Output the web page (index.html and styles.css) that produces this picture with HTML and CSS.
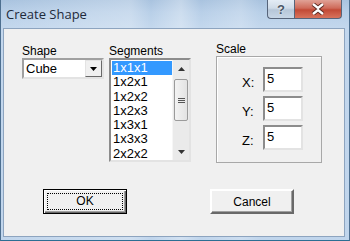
FILE: index.html
```html
<!DOCTYPE html>
<html lang="en">
<head>
  <meta charset="UTF-8" />
  <title>Create Shape</title>
  <link rel="stylesheet" href="styles.css">
</head>
<body>

  <div class="window">
    <div class="titlebar">
      <span class="title">Create Shape</span>
      <div class="caption-btns">
        <div class="cap-btn help">?</div>
        <div class="cap-btn close">
          <svg width="18" height="12" viewBox="0 0 18 12">
            <path d="M4 1 L9 5 L14 1 M4 11 L9 7 L14 11" fill="none" stroke="#5a2a22" stroke-width="4.2"/>
            <path d="M4 1 L9 5 L14 1 M4 11 L9 7 L14 11" fill="none" stroke="#fff" stroke-width="2.4"/>
          </svg>
        </div>
      </div>
    </div>

    <div class="client">
      <div class="columns">
        <div class="col col-shape">
          <div class="label">Shape</div>
          <div class="combo">
            <span class="combo-text">Cube</span>
            <div class="combo-btn">
              <svg width="7" height="4" viewBox="0 0 7 4"><path d="M0 0 H7 L3.5 4 Z" fill="#000"/></svg>
            </div>
          </div>
        </div>

        <div class="col col-seg">
          <div class="label">Segments</div>
          <div class="listbox">
            <ul class="items">
              <li class="selected">1x1x1</li>
              <li>1x2x1</li>
              <li>1x2x2</li>
              <li>1x2x3</li>
              <li>1x3x1</li>
              <li>1x3x3</li>
              <li>2x2x2</li>
            </ul>
            <div class="scrollbar">
              <div class="arrow">
                <svg width="7" height="4" viewBox="0 0 7 4"><path d="M0 4 H7 L3.5 0 Z" fill="#333"/></svg>
              </div>
              <div class="track">
                <div class="thumb">
                  <span class="grip"></span>
                  <span class="grip"></span>
                  <span class="grip"></span>
                </div>
              </div>
              <div class="arrow">
                <svg width="7" height="4" viewBox="0 0 7 4"><path d="M0 0 H7 L3.5 4 Z" fill="#333"/></svg>
              </div>
            </div>
          </div>
        </div>

        <div class="col col-scale">
          <div class="label">Scale</div>
          <div class="groupbox">
            <div class="field"><span class="field-label">X:</span><div class="edit">5</div></div>
            <div class="field"><span class="field-label">Y:</span><div class="edit">5</div></div>
            <div class="field"><span class="field-label">Z:</span><div class="edit">5</div></div>
          </div>
        </div>
      </div>

      <div class="buttons">
        <button class="btn default"><span class="focus">OK</span></button>
        <button class="btn">Cancel</button>
      </div>
    </div>
  </div>

</body>
</html>
```

FILE: styles.css
```css
* {
  margin: 0;
  padding: 0;
  box-sizing: border-box;
}

body {
  width: 350px;
  height: 241px;
  overflow: hidden;
  font-family: 'Liberation Sans', Arial, sans-serif;
  font-size: 12px;
  color: #000;
}

.window {
  width: 350px;
  height: 241px;
  display: flex;
  flex-direction: column;
  border-left: 1px solid #4d6f90;
  border-right: 1px solid #4d6f90;
  border-bottom: 1px solid #2c6e93;
  background:
    linear-gradient(90deg, rgba(255,255,255,0) 0, rgba(255,255,255,0.25) 130px, rgba(255,255,255,0) 150px,
      rgba(255,255,255,0.3) 180px, rgba(255,255,255,0) 200px, rgba(255,255,255,0.2) 240px, rgba(255,255,255,0) 260px),
    linear-gradient(180deg, #a9c3df 0, #b8cfe8 12px, #c3d7ed 28px, #c0d5ec 100%);
}

.titlebar {
  height: 28px;
  display: flex;
  justify-content: space-between;
  align-items: flex-start;
  padding-left: 5px;
}

.title {
  font-family: 'Open Sans', 'Liberation Sans', sans-serif;
  font-size: 13px;
  line-height: 15px;
  margin-top: 7px;
  color: #1e2a3a;
}

.caption-btns {
  display: flex;
  margin-right: 7px;
}

.cap-btn {
  height: 19px;
  border: 1px solid #56647a;
  border-top: none;
  display: flex;
  align-items: center;
  justify-content: center;
}

.help {
  width: 27px;
  border-radius: 0 0 0 4px;
  border-right: none;
  background: linear-gradient(180deg, #e4ecf5 0, #cfdbe8 45%, #b6c6d8 55%, #c7d6e6 100%);
  color: #4a5766;
  font-weight: bold;
  font-size: 13px;
  text-shadow: 0 0 2px #fff;
}

.close {
  width: 48px;
  border-radius: 0 0 4px 0;
  background: linear-gradient(180deg, #e0a296 0, #cf6b5a 45%, #c24a36 55%, #d8735c 100%);
}

.client {
  flex: 1;
  margin: 0 4px 3px 2px;
  background: #f0f0f0;
  border: 1px solid #8da4bf;
  padding: 15px 0 0 18px;
}

.columns {
  display: flex;
  align-items: flex-start;
}

.label {
  height: 14px;
  line-height: 14px;
}

.col-shape {
  width: 82px;
  margin-right: 5px;
}

.col-seg {
  width: 82px;
  margin-right: 25px;
}

.col-scale {
  width: 106px;
  margin-top: -2px;
}

.combo {
  height: 21px;
  display: flex;
  align-items: stretch;
  background: #fff;
  border: 2px solid;
  border-color: #a0a0a0 #e3e3e3 #e3e3e3 #a0a0a0;
}

.combo-text {
  flex: 1;
  padding-left: 2px;
  font-size: 13px;
  line-height: 17px;
}

.combo-btn {
  width: 17px;
  background: #f0f0f0;
  border: 1px solid;
  border-color: #e3e3e3 #696969 #696969 #e3e3e3;
  display: flex;
  align-items: center;
  justify-content: center;
}

.listbox {
  height: 104px;
  display: flex;
  background: #fff;
  border: 2px solid;
  border-color: #8c8c8c #e3e3e3 #e3e3e3 #8c8c8c;
}

.items {
  flex: 1;
  list-style: none;
  font-size: 13px;
  line-height: 14.3px;
  padding: 1px 0 0 1px;
}

.items li {
  padding-left: 1px;
}

.items .selected {
  background: #3399ff;
  color: #fff;
}

.scrollbar {
  width: 17px;
  display: flex;
  flex-direction: column;
  background: #eaeaea;
  border-left: 1px solid #f6f6f6;
}

.arrow {
  height: 17px;
  display: flex;
  align-items: center;
  justify-content: center;
}

.track {
  flex: 1;
  padding-top: 2px;
}

.thumb {
  height: 42px;
  margin: 0 1px;
  border: 1px solid #9b9b9b;
  border-radius: 2px;
  background: linear-gradient(90deg, #f3f3f3, #e3e3e3);
  display: flex;
  flex-direction: column;
  align-items: center;
  justify-content: center;
  gap: 1px;
}

.grip {
  width: 7px;
  height: 1px;
  background: #555;
}

.groupbox {
  height: 107px;
  border: 1px solid #a8a8a8;
  box-shadow: inset 1px 1px 0 #fff;
  padding: 10px 0 0 25px;
  display: flex;
  flex-direction: column;
  gap: 4px;
}

.field {
  display: flex;
  align-items: center;
}

.field-label {
  width: 21px;
  font-size: 13px;
  padding-top: 5px;
}

.edit {
  width: 40px;
  height: 25px;
  background: #fff;
  border: 2px solid;
  border-color: #8c8c8c #e3e3e3 #e3e3e3 #8c8c8c;
  font-size: 13px;
  line-height: 19px;
  padding-left: 2px;
}

.buttons {
  display: flex;
  gap: 83px;
  margin-top: 26px;
  padding-left: 21px;
}

.btn {
  width: 84px;
  height: 25px;
  font-family: 'Liberation Sans', Arial, sans-serif;
  font-size: 12px;
  color: #000;
  background: #f0f0f0;
  border: 2px solid;
  border-color: #fff #696969 #696969 #fff;
  box-shadow: inset -1px -1px 0 #a0a0a0;
}

.default {
  border: 1px solid #000;
  box-shadow: inset 1px 1px 0 #fff, inset -1px -1px 0 #696969, inset -2px -2px 0 #a0a0a0;
  padding: 3px;
}

.focus {
  display: block;
  height: 100%;
  border: 1px dotted #000;
  line-height: 15px;
}
```
